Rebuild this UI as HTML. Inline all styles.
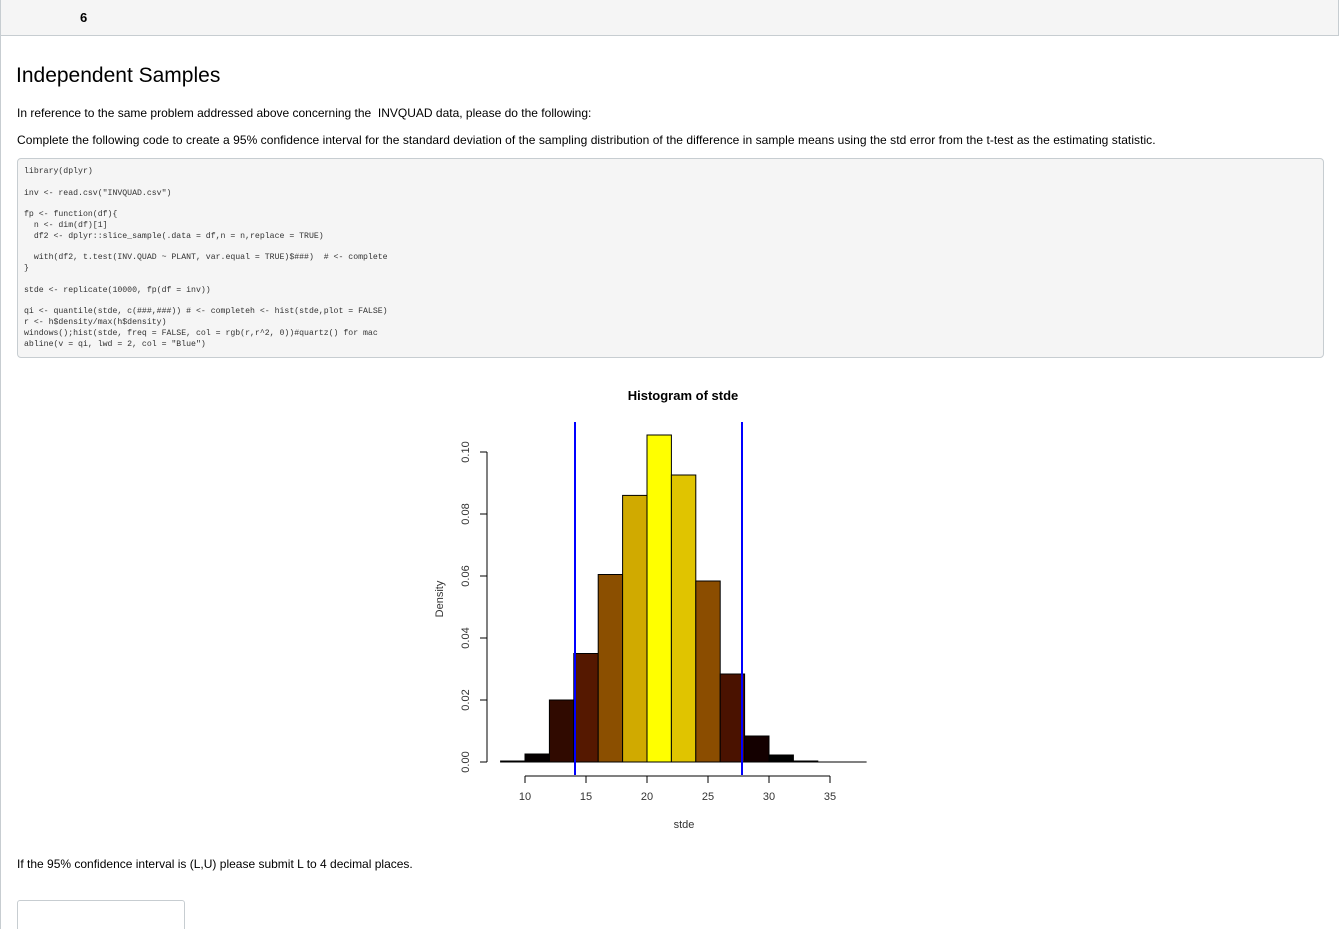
<!DOCTYPE html>
<html style="overflow:hidden"><head><style>
body{margin:0;width:1339px;height:929px;background:#fff;font-family:"Liberation Sans",sans-serif;position:relative;overflow:hidden;color:#2d3b45}
.top{position:absolute;left:0;top:0;width:1337px;height:35px;background:#f5f5f5;border:1px solid #c7cdd1;border-top:none}
.left{position:absolute;left:0;top:36px;width:1px;height:893px;background:#c7cdd1}
.t{position:absolute;white-space:nowrap}
pre{position:absolute;left:17px;top:158px;width:1293px;height:184px;margin:0;padding:8px 6px 6px;background:#f5f5f5;border:1px solid #c7cdd1;border-radius:4px;font-family:"Liberation Mono",monospace;font-size:8.2px;line-height:10.8px;color:#333}
</style></head><body>
<div class="top"></div><div class="left"></div>
<div class="t" style="left:80px;top:10px;font-size:13px;font-weight:bold;color:#000">6</div>
<div class="t" style="left:16px;top:64px;font-size:21px;color:#000">Independent Samples</div>
<div class="t" style="left:17px;top:106px;font-size:12px;color:#000">In reference to the same problem addressed above concerning the &nbsp;INVQUAD data, please do the following:</div>
<div class="t" style="left:17px;top:133px;font-size:12px;color:#000;letter-spacing:0.05px">Complete the following code to create a 95% confidence interval for the standard deviation of the sampling distribution of the difference in sample means using the std error from the t-test as the estimating statistic.</div>
<pre>library(dplyr)

inv &lt;- read.csv("INVQUAD.csv")

fp &lt;- function(df){
  n &lt;- dim(df)[1]
  df2 &lt;- dplyr::slice_sample(.data = df,n = n,replace = TRUE)

  with(df2, t.test(INV.QUAD ~ PLANT, var.equal = TRUE)$###)  # &lt;- complete
}

stde &lt;- replicate(10000, fp(df = inv))

qi &lt;- quantile(stde, c(###,###)) # &lt;- completeh &lt;- hist(stde,plot = FALSE)
r &lt;- h$density/max(h$density)
windows();hist(stde, freq = FALSE, col = rgb(r,r^2, 0))#quartz() for mac
abline(v = qi, lwd = 2, col = "Blue")</pre>
<svg style="position:absolute;left:0;top:0" width="1339" height="929" font-family="Liberation Sans,sans-serif">
<text x="683" y="400" font-size="13" font-weight="bold" text-anchor="middle" fill="#000">Histogram of stde</text>
<g stroke="#000" stroke-width="1">
<rect x="500.6" y="761" width="24.4" height="1" fill="#000"/>
<rect x="525" y="754" width="24.4" height="8" fill="#050000"/>
<rect x="549.4" y="700" width="24.4" height="62" fill="#300a00"/>
<rect x="573.8" y="653.5" width="24.4" height="108.5" fill="#551800"/>
<rect x="598.2" y="574.5" width="24.4" height="187.5" fill="#8b4f00"/>
<rect x="622.6" y="495.4" width="24.4" height="266.6" fill="#d0aa00"/>
<rect x="647" y="435" width="24.4" height="327" fill="#ffff00"/>
<rect x="671.4" y="475" width="24.4" height="287" fill="#e0c400"/>
<rect x="695.8" y="581" width="24.4" height="181" fill="#8b4d00"/>
<rect x="720.2" y="674" width="24.4" height="88" fill="#4a1200"/>
<rect x="744.6" y="736" width="24.4" height="26" fill="#140000"/>
<rect x="769" y="755" width="24.4" height="7" fill="#000"/>
<rect x="793.4" y="761" width="24.4" height="1" fill="#000"/>
<line x1="817.8" y1="762" x2="866.6" y2="762"/>
<line x1="487" y1="452" x2="487" y2="762"/>
<line x1="480" y1="452" x2="487" y2="452"/><line x1="480" y1="514" x2="487" y2="514"/><line x1="480" y1="576" x2="487" y2="576"/><line x1="480" y1="638" x2="487" y2="638"/><line x1="480" y1="700" x2="487" y2="700"/><line x1="480" y1="762" x2="487" y2="762"/>
<line x1="525" y1="776" x2="830" y2="776"/>
<line x1="525" y1="776" x2="525" y2="783"/><line x1="586" y1="776" x2="586" y2="783"/><line x1="647" y1="776" x2="647" y2="783"/><line x1="708" y1="776" x2="708" y2="783"/><line x1="769" y1="776" x2="769" y2="783"/><line x1="830" y1="776" x2="830" y2="783"/>
</g>
<line x1="575" y1="422" x2="575" y2="775" stroke="#0000ff" stroke-width="2"/>
<line x1="742" y1="422" x2="742" y2="775" stroke="#0000ff" stroke-width="2"/>
<g font-size="11" fill="#333" text-anchor="middle">
<text x="525" y="800">10</text><text x="586" y="800">15</text><text x="647" y="800">20</text><text x="708" y="800">25</text><text x="769" y="800">30</text><text x="830" y="800">35</text>
<text x="684" y="828">stde</text>
<text transform="translate(469,452) rotate(-90)">0.10</text>
<text transform="translate(469,514) rotate(-90)">0.08</text>
<text transform="translate(469,576) rotate(-90)">0.06</text>
<text transform="translate(469,638) rotate(-90)">0.04</text>
<text transform="translate(469,700) rotate(-90)">0.02</text>
<text transform="translate(469,762) rotate(-90)">0.00</text>
<text transform="translate(443,599) rotate(-90)">Density</text>
</g>
</svg>
<div class="t" style="left:17px;top:857px;font-size:12px;color:#000">If the 95% confidence interval is (L,U) please submit L to 4 decimal places.</div>
<div style="position:absolute;left:17px;top:900px;width:166px;height:40px;border:1px solid #c7cdd1;border-radius:3px"></div>
</body></html>
